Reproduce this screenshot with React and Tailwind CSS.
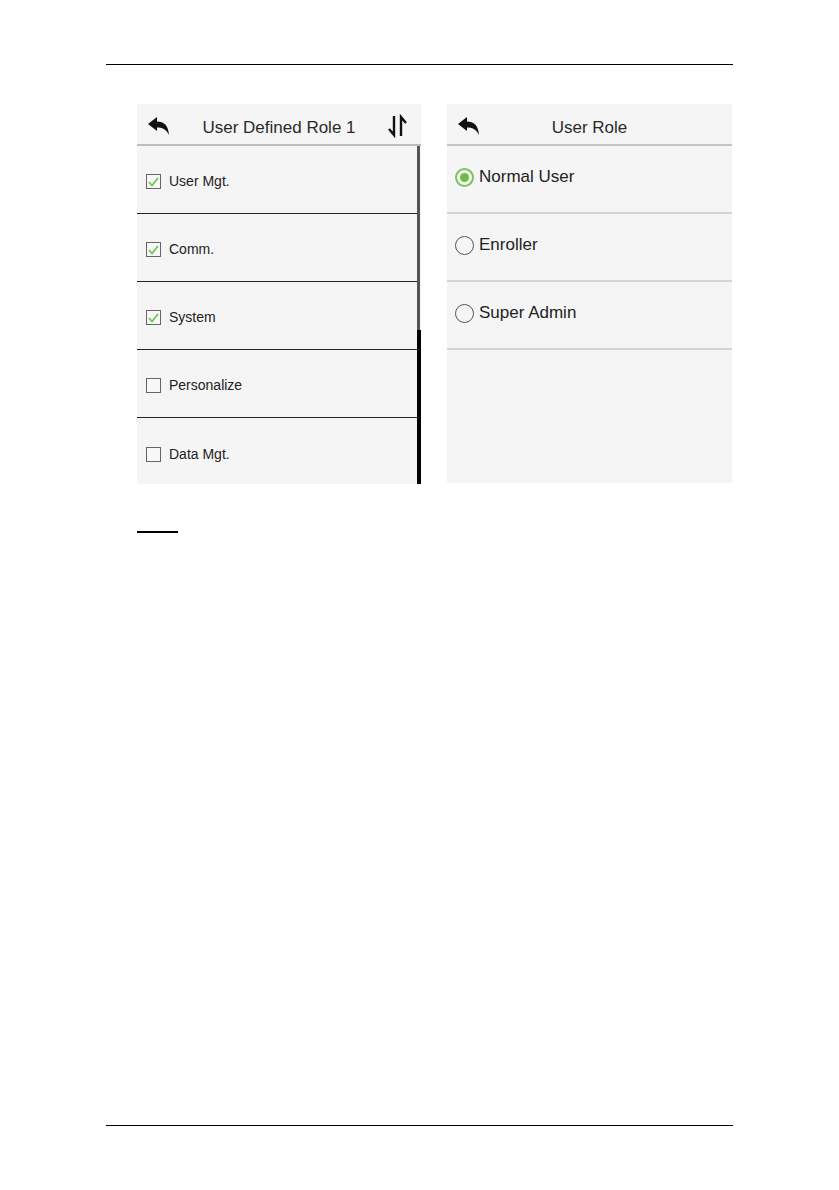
const leftRows = [
  { label: "User Mgt.", checked: true },
  { label: "Comm.", checked: true },
  { label: "System", checked: true },
  { label: "Personalize", checked: false },
  { label: "Data Mgt.", checked: false },
];

const roles = [
  { label: "Normal User", selected: true },
  { label: "Enroller", selected: false },
  { label: "Super Admin", selected: false },
];

function BackIcon() {
  return (
    <svg width="24" height="20" viewBox="0 0 24 20">
      <path d="M1 8 L10 1 L10 5.5 C17 5.5 21 9 22 19 C19 13 15 11.5 10 11.5 L10 15 Z" fill="#111" />
    </svg>
  );
}

function SortIcon() {
  return (
    <svg width="24" height="24" viewBox="0 0 24 24" fill="none" stroke="#111" strokeWidth="2.4">
      <path d="M8 2 L8 21 L3 15" />
      <path d="M15 22 L15 3 L20 9" />
    </svg>
  );
}

function Checkbox({ checked }) {
  return (
    <div className="w-[15px] h-[15px] border border-[#666] bg-[#f7f7f7] flex items-center justify-center">
      {checked && (
        <svg width="11" height="10" viewBox="0 0 11 10" fill="none" stroke="#6cc24a" strokeWidth="1.6">
          <path d="M1 5 L4 8.5 L10 1" />
        </svg>
      )}
    </div>
  );
}

function Radio({ selected }) {
  return selected ? (
    <div className="w-[19px] h-[19px] rounded-full border-2 border-[#7cc35a] flex items-center justify-center">
      <div className="w-[9px] h-[9px] rounded-full bg-[#6cbd45]" />
    </div>
  ) : (
    <div className="w-[19px] h-[19px] rounded-full border border-[#555]" />
  );
}

export default function App() {
  return (
    <div className="w-[839px] h-[1190px] bg-white relative" style={{ fontFamily: '"Liberation Sans", Arial, sans-serif' }}>
      <div className="pt-[64px] px-[106px]">
        <div className="h-px bg-black w-[627px]" />
      </div>

      <div className="flex gap-[26px] pl-[137px] mt-[39px]">
        <div className="w-[284px] h-[380px] bg-[#f5f5f5] flex flex-col overflow-hidden">
          <div className="h-[42px] shrink-0 flex items-center justify-between pl-[10px] pr-[11px] pt-[4px] border-b-2 border-[#bdbdbd] relative">
            <BackIcon />
            <span className="absolute left-0 right-0 text-center text-[17px] text-[#2a2a2a] pt-[4px]">User Defined Role 1</span>
            <SortIcon />
          </div>
          <div className="flex flex-1">
            <div className="flex-1 flex flex-col">
              {leftRows.map((row, i) => (
                <div
                  key={row.label}
                  className={`h-[68px] shrink-0 flex items-center gap-[8px] pl-[9px] pt-[4px] ${i < leftRows.length - 1 ? "border-b border-[#222]" : ""}`}
                >
                  <Checkbox checked={row.checked} />
                  <span className="text-[14px] text-[#222]">{row.label}</span>
                </div>
              ))}
            </div>
            <div className="w-[4px] flex flex-col">
              <div className="h-[184px] w-[3px] bg-[#555]" />
              <div className="flex-1 w-[4px] bg-black" />
            </div>
          </div>
        </div>

        <div className="w-[285px] h-[379px] bg-[#f5f5f5] flex flex-col overflow-hidden">
          <div className="h-[42px] shrink-0 flex items-center px-[10px] pt-[4px] border-b-2 border-[#c4c4c4] relative">
            <BackIcon />
            <span className="absolute left-0 right-0 text-center text-[17px] text-[#2a2a2a] pt-[4px]">User Role</span>
          </div>
          {roles.map((role) => (
            <div key={role.label} className="h-[68px] shrink-0 flex items-center gap-[5px] pl-[8px] pb-[4px] border-b-2 border-[#d4d4d4]">
              <Radio selected={role.selected} />
              <span className="text-[17px] text-[#222]">{role.label}</span>
            </div>
          ))}
        </div>
      </div>

      <div className="pl-[137px] mt-[47px]">
        <div className="h-[2px] w-[41px] bg-black" />
      </div>

      <div className="absolute left-[106px] top-[1125px] h-px w-[627px] bg-black" />
    </div>
  );
}
